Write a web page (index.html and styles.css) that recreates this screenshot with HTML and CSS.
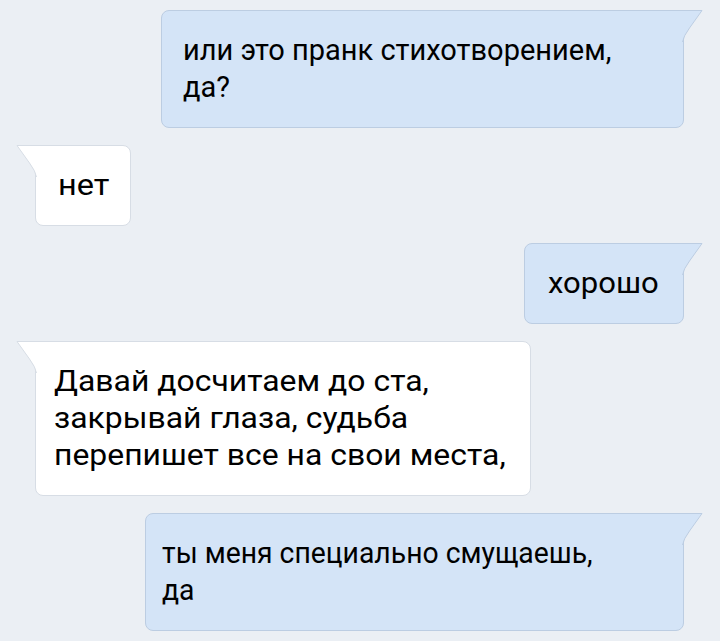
FILE: index.html
```html
<!DOCTYPE html>
<html lang="ru">
<head>
    <meta charset="UTF-8">
    <meta name="viewport" content="width=device-width, initial-scale=1.0">
    <title>Диалог</title>
    <link rel="stylesheet" href="styles.css">
</head>
<body>
    <div class="chat">
        <!-- outgoing -->
        <div class="bubble out w-523">
            <span class="text">или это пранк стихотворением,<br>да?</span>
            <svg class="tail" width="22" height="32" viewBox="0 0 22 32">
                <path class="tail-fill" d="M0 0.5 H20 L7.5 18 Q1.5 26 0.5 32 H0 Z"/>
                <path class="tail-line" d="M0 0.5 H20 L7.5 18 Q1.5 26 0.5 32"/>
            </svg>
        </div>

        <!-- incoming -->
        <div class="bubble in w-96">
            <span class="text stretch-12">нет</span>
            <svg class="tail" width="22" height="32" viewBox="0 0 22 32">
                <path class="tail-fill" d="M0 0.5 H20 L7.5 18 Q1.5 26 0.5 32 H0 Z"/>
                <path class="tail-line" d="M0 0.5 H20 L7.5 18 Q1.5 26 0.5 32"/>
            </svg>
        </div>

        <div class="bubble out w-160">
            <span class="text stretch-7">хорошо</span>
            <svg class="tail" width="22" height="32" viewBox="0 0 22 32">
                <path class="tail-fill" d="M0 0.5 H20 L7.5 18 Q1.5 26 0.5 32 H0 Z"/>
                <path class="tail-line" d="M0 0.5 H20 L7.5 18 Q1.5 26 0.5 32"/>
            </svg>
        </div>

        <div class="bubble in w-496">
            <span class="text stretch-10">Давай досчитаем до ста,<br>закрывай глаза, судьба<br>перепишет все на свои места,</span>
            <svg class="tail" width="22" height="32" viewBox="0 0 22 32">
                <path class="tail-fill" d="M0 0.5 H20 L7.5 18 Q1.5 26 0.5 32 H0 Z"/>
                <path class="tail-line" d="M0 0.5 H20 L7.5 18 Q1.5 26 0.5 32"/>
            </svg>
        </div>

        <div class="bubble out w-539">
            <span class="text shrink-2">ты меня специально смущаешь,<br>да</span>
            <svg class="tail" width="22" height="32" viewBox="0 0 22 32">
                <path class="tail-fill" d="M0 0.5 H20 L7.5 18 Q1.5 26 0.5 32 H0 Z"/>
                <path class="tail-line" d="M0 0.5 H20 L7.5 18 Q1.5 26 0.5 32"/>
            </svg>
        </div>
    </div>
</body>
</html>
```

FILE: styles.css
```css
* {
    margin: 0;
    padding: 0;
    box-sizing: border-box;
}

body {
    font-family: Roboto, 'Noto Sans', sans-serif;
    background: #ebeff4;
    color: #000;
    min-height: 100vh;
}

.chat {
    display: flex;
    flex-direction: column;
    gap: 17px;
    padding: 10px 0;
}

.bubble {
    position: relative;
    font-size: 29px;
    line-height: 37px;
    padding: 21px 0 21px 21px;
    border: 1px solid;
    border-radius: 8px;
    white-space: nowrap;
}

.text {
    display: inline-block;
    transform-origin: left center;
}

/* the screenshot is slightly stretched in places */
.shrink-2 { transform: scaleX(0.977); }
.stretch-7 { transform: scaleX(1.07); }
.stretch-10 { transform: scaleX(1.1); }
.stretch-12 { transform: scaleX(1.12); }

/* Outgoing messages */
.out {
    align-self: flex-end;
    margin-right: 36px;
    background: #d4e4f7;
    border-color: #bccde2;
    border-top-right-radius: 0;
}

.out .tail {
    position: absolute;
    top: -1px;
    right: -21px;
}

.out .tail-fill {
    fill: #d4e4f7;
}

.out .tail-line {
    fill: none;
    stroke: #bccde2;
    stroke-width: 1;
}

/* Incoming messages */
.in {
    align-self: flex-start;
    margin-left: 35px;
    background: #fff;
    border-color: #d7dde5;
    border-top-left-radius: 0;
}

.in .tail {
    position: absolute;
    top: -1px;
    left: -21px;
    transform: scaleX(-1);
}

.in .tail-fill {
    fill: #fff;
}

.in .tail-line {
    fill: none;
    stroke: #d7dde5;
    stroke-width: 1;
}

/* Bubble widths taken from the screenshot */
.w-96 { width: 96px; padding-left: 22px; }
.w-160 { width: 160px; padding-left: 23px; }
.w-496 { width: 496px; padding-left: 18px; }
.w-523 { width: 523px; }
.w-539 { width: 539px; padding-left: 16px; }
```
